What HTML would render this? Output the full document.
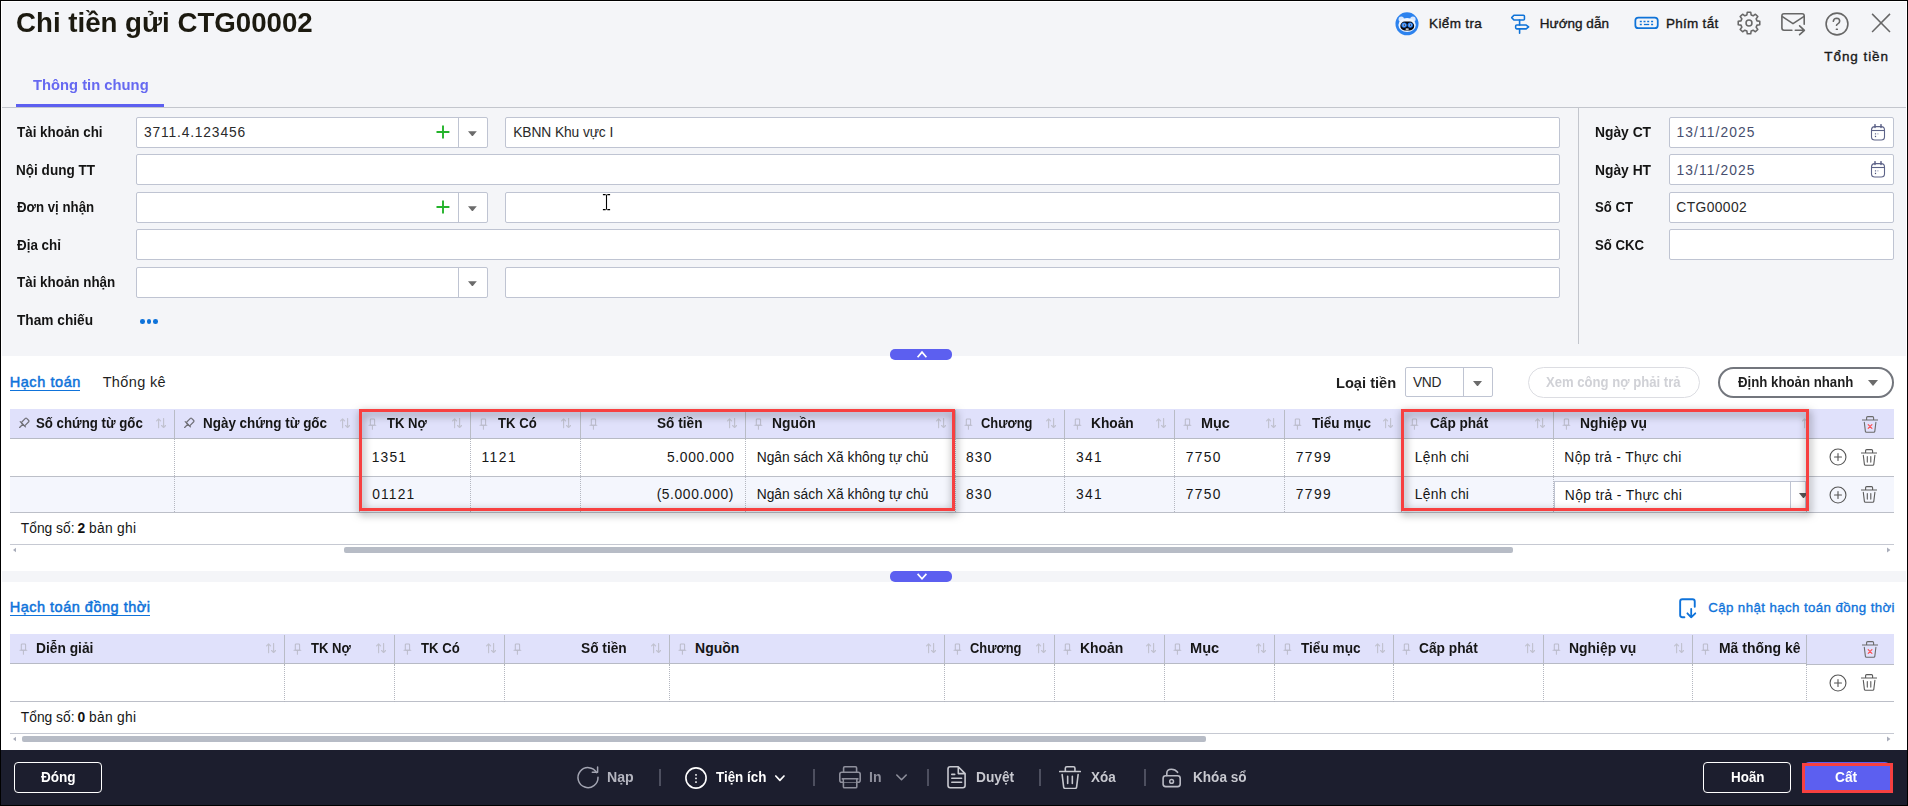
<!DOCTYPE html>
<html lang="vi"><head><meta charset="utf-8"><title>Chi tiền gửi CTG00002</title>
<style>
html,body{margin:0;padding:0;}
body{width:1908px;height:806px;overflow:hidden;background:#000;position:relative;font-family:"Liberation Sans", sans-serif;}
#app div,#app span,#app svg{position:absolute;box-sizing:border-box;}
#app{position:absolute;left:0;top:0;width:1908px;height:806px;overflow:hidden;}
#app span{white-space:pre;line-height:normal;}
</style></head><body><div id="app">
<div style="left:1px;top:1px;width:1906px;height:804px;background:#fff;"></div>
<div style="left:2px;top:2px;width:1904px;height:354px;background:#f4f5f8;"></div>
<div style="left:2px;top:356px;width:1904px;height:215px;background:#fff;"></div>
<div style="left:2px;top:571px;width:1904px;height:11px;background:#f4f5f8;"></div>
<div style="left:2px;top:582px;width:1904px;height:168px;background:#fff;"></div>
<div style="left:1px;top:750px;width:1906px;height:55px;background:#1c1e2e;"></div>
<div style="left:16px;top:104px;width:148px;height:3px;background:#5c5ff0;"></div>
<div style="left:2px;top:107px;width:1904px;height:1px;background:#c3c6cd;"></div>
<div style="left:1578px;top:108px;width:1px;height:236px;background:#c3c6cd;"></div>
<div style="left:136px;top:117px;width:351.5px;height:31px;background:#fff;border:1px solid #bfc4d2;border-radius:2px;"></div>
<div style="left:458px;top:118px;width:1px;height:29px;background:#bfc4d2;"></div>
<svg style="left:468px;top:130.8px;" width="8.8" height="5.7" viewBox="0 0 9 5.5" fill="none"><path d="M0 0h9L4.5 5.5z" fill="#6b6b6b"/></svg>
<svg style="left:435.5px;top:125px;" width="14.0" height="14" viewBox="0 0 14 14" fill="none"><path d="M7 0.400v13.200M0.500 7h12.900" stroke="#24b32b" stroke-width="1.900"/></svg>
<div style="left:505px;top:117px;width:1054.5px;height:31px;background:#fff;border:1px solid #bfc4d2;border-radius:2px;"></div>
<div style="left:136px;top:154px;width:1423.5px;height:31px;background:#fff;border:1px solid #bfc4d2;border-radius:2px;"></div>
<div style="left:136px;top:192px;width:351.5px;height:31px;background:#fff;border:1px solid #bfc4d2;border-radius:2px;"></div>
<div style="left:458px;top:193px;width:1px;height:29px;background:#bfc4d2;"></div>
<svg style="left:468px;top:205.8px;" width="8.8" height="5.7" viewBox="0 0 9 5.5" fill="none"><path d="M0 0h9L4.5 5.5z" fill="#6b6b6b"/></svg>
<svg style="left:435.5px;top:200px;" width="14.0" height="14" viewBox="0 0 14 14" fill="none"><path d="M7 0.400v13.200M0.500 7h12.900" stroke="#24b32b" stroke-width="1.900"/></svg>
<div style="left:505px;top:192px;width:1054.5px;height:31px;background:#fff;border:1px solid #bfc4d2;border-radius:2px;"></div>
<div style="left:136px;top:229px;width:1423.5px;height:31px;background:#fff;border:1px solid #bfc4d2;border-radius:2px;"></div>
<div style="left:136px;top:267px;width:351.5px;height:31px;background:#fff;border:1px solid #bfc4d2;border-radius:2px;"></div>
<div style="left:458px;top:268px;width:1px;height:29px;background:#bfc4d2;"></div>
<svg style="left:468px;top:280.8px;" width="8.8" height="5.7" viewBox="0 0 9 5.5" fill="none"><path d="M0 0h9L4.5 5.5z" fill="#6b6b6b"/></svg>
<div style="left:505px;top:267px;width:1054.5px;height:31px;background:#fff;border:1px solid #bfc4d2;border-radius:2px;"></div>
<div style="left:140.0px;top:319.2px;width:4.6px;height:4.6px;background:#0f73da;border-radius:50%;"></div>
<div style="left:146.7px;top:319.2px;width:4.6px;height:4.6px;background:#0f73da;border-radius:50%;"></div>
<div style="left:153.4px;top:319.2px;width:4.6px;height:4.6px;background:#0f73da;border-radius:50%;"></div>
<div style="left:1669px;top:117px;width:224.5px;height:31px;background:#fff;border:1px solid #bfc4d2;border-radius:2px;"></div>
<svg style="left:1870px;top:123.5px;" width="16" height="17" viewBox="0 0 16 17" fill="none"><rect x="1.5" y="2.600" width="13" height="13.400" rx="3.300" stroke="#5d6388" stroke-width="1.100"/><path d="M1.500 6.500h13" stroke="#5d6388" stroke-width="1.100"/><path d="M5 0.700v2.700M11 0.700v2.700" stroke="#5d6388" stroke-width="1.500" stroke-linecap="round"/><rect x="4.900" y="9.200" width="1.200" height="1.300" fill="#6d7396"/><rect x="7.300" y="9.200" width="1.200" height="1.300" fill="#aeb2c8"/><rect x="4.900" y="11.800" width="1.200" height="1.300" fill="#4b517a"/></svg>
<div style="left:1669px;top:154px;width:224.5px;height:31px;background:#fff;border:1px solid #bfc4d2;border-radius:2px;"></div>
<svg style="left:1870px;top:160.5px;" width="16" height="17" viewBox="0 0 16 17" fill="none"><rect x="1.5" y="2.600" width="13" height="13.400" rx="3.300" stroke="#5d6388" stroke-width="1.100"/><path d="M1.500 6.500h13" stroke="#5d6388" stroke-width="1.100"/><path d="M5 0.700v2.700M11 0.700v2.700" stroke="#5d6388" stroke-width="1.500" stroke-linecap="round"/><rect x="4.900" y="9.200" width="1.200" height="1.300" fill="#6d7396"/><rect x="7.300" y="9.200" width="1.200" height="1.300" fill="#aeb2c8"/><rect x="4.900" y="11.800" width="1.200" height="1.300" fill="#4b517a"/></svg>
<div style="left:1669px;top:192px;width:224.5px;height:31px;background:#fff;border:1px solid #bfc4d2;border-radius:2px;"></div>
<div style="left:1669px;top:229px;width:224.5px;height:31px;background:#fff;border:1px solid #bfc4d2;border-radius:2px;"></div>
<div style="left:890px;top:349px;width:62px;height:11px;background:#5c5ff0;border-radius:5px;"></div>
<svg style="left:915px;top:350px;" width="14" height="10" viewBox="0 0 14 10" fill="none"><path d="M2.600 7.200L7 2.100 11.400 7.200" stroke="#fff" stroke-width="1.700"/></svg>
<div style="left:890px;top:571px;width:62px;height:11px;background:#5c5ff0;border-radius:5px;"></div>
<svg style="left:915px;top:572px;" width="14" height="10" viewBox="0 0 14 10" fill="none"><path d="M2.600 1.900L7 6.800 11.400 1.900" stroke="#fff" stroke-width="1.700"/></svg>
<div style="left:10px;top:390px;width:70px;height:1px;background:#0f73da;"></div>
<div style="left:1405px;top:367px;width:87.5px;height:30px;background:#fff;border:1px solid #bfc4d2;border-radius:2px;"></div>
<div style="left:1463px;top:368px;width:1px;height:28px;background:#bfc4d2;"></div>
<svg style="left:1472.5px;top:380.5px;" width="9.0" height="5.5" viewBox="0 0 9 5.5" fill="none"><path d="M0 0h9L4.5 5.5z" fill="#6b6b6b"/></svg>
<div style="left:1528px;top:367px;width:172px;height:30.5px;border:1px solid #dcdde2;border-radius:16px;background:#fff;"></div>
<div style="left:1718px;top:367px;width:175.5px;height:30.5px;border:2px solid #73767d;border-radius:16px;background:#fff;"></div>
<svg style="left:1867.5px;top:379.5px;" width="10.0" height="6.0" viewBox="0 0 10 6" fill="none"><path d="M0 0h10L5 6z" fill="#6b6b6b"/></svg>
<div style="left:10px;top:409px;width:1884px;height:30px;background:#e0e1fb;"></div>
<div style="left:10px;top:438px;width:1884px;height:1px;background:#b7bac5;"></div>
<div style="left:10px;top:476.0px;width:1884px;height:1.0px;background:#bcbfc8;"></div>
<div style="left:10px;top:476.5px;width:1884px;height:35.5px;background:#f4f6fd;"></div>
<div style="left:10px;top:511.5px;width:1884px;height:1.0px;background:#bcbfc8;"></div>
<div style="left:174.0px;top:410px;width:1.0px;height:28px;background:#b9bcc6;"></div>
<div style="left:174.0px;top:439px;width:1.0px;height:73px;border-left:1px dotted #b4b7c0;"></div>
<div style="left:358.5px;top:410px;width:1.0px;height:28px;background:#b9bcc6;"></div>
<div style="left:358.5px;top:439px;width:1.0px;height:73px;border-left:1px dotted #b4b7c0;"></div>
<div style="left:470.0px;top:410px;width:1.0px;height:28px;background:#b9bcc6;"></div>
<div style="left:470.0px;top:439px;width:1.0px;height:73px;border-left:1px dotted #b4b7c0;"></div>
<div style="left:579.75px;top:410px;width:1.0px;height:28px;background:#b9bcc6;"></div>
<div style="left:579.75px;top:439px;width:1.0px;height:73px;border-left:1px dotted #b4b7c0;"></div>
<div style="left:745.0px;top:410px;width:1.0px;height:28px;background:#b9bcc6;"></div>
<div style="left:745.0px;top:439px;width:1.0px;height:73px;border-left:1px dotted #b4b7c0;"></div>
<div style="left:954.5px;top:410px;width:1.0px;height:28px;background:#b9bcc6;"></div>
<div style="left:954.5px;top:439px;width:1.0px;height:73px;border-left:1px dotted #b4b7c0;"></div>
<div style="left:1064.0px;top:410px;width:1.0px;height:28px;background:#b9bcc6;"></div>
<div style="left:1064.0px;top:439px;width:1.0px;height:73px;border-left:1px dotted #b4b7c0;"></div>
<div style="left:1174.0px;top:410px;width:1.0px;height:28px;background:#b9bcc6;"></div>
<div style="left:1174.0px;top:439px;width:1.0px;height:73px;border-left:1px dotted #b4b7c0;"></div>
<div style="left:1284.0px;top:410px;width:1.0px;height:28px;background:#b9bcc6;"></div>
<div style="left:1284.0px;top:439px;width:1.0px;height:73px;border-left:1px dotted #b4b7c0;"></div>
<div style="left:1401.0px;top:410px;width:1.0px;height:28px;background:#b9bcc6;"></div>
<div style="left:1401.0px;top:439px;width:1.0px;height:73px;border-left:1px dotted #b4b7c0;"></div>
<div style="left:1553.0px;top:410px;width:1.0px;height:28px;background:#b9bcc6;"></div>
<div style="left:1553.0px;top:439px;width:1.0px;height:73px;border-left:1px dotted #b4b7c0;"></div>
<div style="left:1805.5px;top:410px;width:1.0px;height:28px;background:#b9bcc6;"></div>
<div style="left:1805.5px;top:439px;width:1.0px;height:73px;border-left:1px dotted #b4b7c0;"></div>
<svg style="left:17px;top:416px;" width="14" height="14" viewBox="0 0 14 14" fill="none"><g transform="translate(6.600 7.500) rotate(45) scale(1.100) translate(-4.400 -6.200)"><rect x="2.300" y="1" width="4.300" height="6.200" rx="0.800" stroke="#707078" stroke-width="1.1"/><path d="M1 7.200H7.800M4.400 7.200V11.300" stroke="#707078" stroke-width="1.1" stroke-linecap="round"/></g></svg>
<svg style="left:155.5px;top:418.4px;" width="10.2" height="10.4" viewBox="0 0 10.2 10.4" fill="none"><path d="M2.600 9.800V0.800M0.600 2.800L2.600 0.800 4.600 2.800M7.600 0.500v9M5.600 7.500l2 2 2-2" stroke="#c1c2d0" stroke-width="1.150" stroke-linecap="round" stroke-linejoin="round"/></svg>
<svg style="left:181.5px;top:416px;" width="14" height="14" viewBox="0 0 14 14" fill="none"><g transform="translate(6.600 7.500) rotate(45) scale(1.100) translate(-4.400 -6.200)"><rect x="2.300" y="1" width="4.300" height="6.200" rx="0.800" stroke="#707078" stroke-width="1.1"/><path d="M1 7.200H7.800M4.400 7.200V11.300" stroke="#707078" stroke-width="1.1" stroke-linecap="round"/></g></svg>
<svg style="left:340px;top:418.4px;" width="10.2" height="10.4" viewBox="0 0 10.2 10.4" fill="none"><path d="M2.600 9.800V0.800M0.600 2.800L2.600 0.800 4.600 2.800M7.600 0.500v9M5.600 7.500l2 2 2-2" stroke="#c1c2d0" stroke-width="1.150" stroke-linecap="round" stroke-linejoin="round"/></svg>
<svg style="left:367.6px;top:417.8px;" width="9" height="12" viewBox="0 0 9 12" fill="none"><rect x="2.300" y="1" width="4.300" height="6.200" rx="0.800" stroke="#bbbccb" stroke-width="1.05"/><path d="M1 7.200H7.800M4.400 7.200V11.300" stroke="#bbbccb" stroke-width="1.05" stroke-linecap="round"/></svg>
<svg style="left:451.5px;top:418.4px;" width="10.2" height="10.4" viewBox="0 0 10.2 10.4" fill="none"><path d="M2.600 9.800V0.800M0.600 2.800L2.600 0.800 4.600 2.800M7.600 0.500v9M5.600 7.500l2 2 2-2" stroke="#c1c2d0" stroke-width="1.150" stroke-linecap="round" stroke-linejoin="round"/></svg>
<svg style="left:479.1px;top:417.8px;" width="9" height="12" viewBox="0 0 9 12" fill="none"><rect x="2.300" y="1" width="4.300" height="6.200" rx="0.800" stroke="#bbbccb" stroke-width="1.05"/><path d="M1 7.200H7.800M4.400 7.200V11.300" stroke="#bbbccb" stroke-width="1.05" stroke-linecap="round"/></svg>
<svg style="left:561.25px;top:418.4px;" width="10.2" height="10.4" viewBox="0 0 10.2 10.4" fill="none"><path d="M2.600 9.800V0.800M0.600 2.800L2.600 0.800 4.600 2.800M7.600 0.500v9M5.600 7.500l2 2 2-2" stroke="#c1c2d0" stroke-width="1.150" stroke-linecap="round" stroke-linejoin="round"/></svg>
<svg style="left:588.85px;top:417.8px;" width="9" height="12" viewBox="0 0 9 12" fill="none"><rect x="2.300" y="1" width="4.300" height="6.200" rx="0.800" stroke="#bbbccb" stroke-width="1.05"/><path d="M1 7.200H7.800M4.400 7.200V11.300" stroke="#bbbccb" stroke-width="1.05" stroke-linecap="round"/></svg>
<svg style="left:726.5px;top:418.4px;" width="10.2" height="10.4" viewBox="0 0 10.2 10.4" fill="none"><path d="M2.600 9.800V0.800M0.600 2.800L2.600 0.800 4.600 2.800M7.600 0.500v9M5.600 7.500l2 2 2-2" stroke="#c1c2d0" stroke-width="1.150" stroke-linecap="round" stroke-linejoin="round"/></svg>
<svg style="left:754.1px;top:417.8px;" width="9" height="12" viewBox="0 0 9 12" fill="none"><rect x="2.300" y="1" width="4.300" height="6.200" rx="0.800" stroke="#bbbccb" stroke-width="1.05"/><path d="M1 7.200H7.800M4.400 7.200V11.300" stroke="#bbbccb" stroke-width="1.05" stroke-linecap="round"/></svg>
<svg style="left:936px;top:418.4px;" width="10.2" height="10.4" viewBox="0 0 10.2 10.4" fill="none"><path d="M2.600 9.800V0.800M0.600 2.800L2.600 0.800 4.600 2.800M7.600 0.500v9M5.600 7.500l2 2 2-2" stroke="#c1c2d0" stroke-width="1.150" stroke-linecap="round" stroke-linejoin="round"/></svg>
<svg style="left:963.6px;top:417.8px;" width="9" height="12" viewBox="0 0 9 12" fill="none"><rect x="2.300" y="1" width="4.300" height="6.200" rx="0.800" stroke="#bbbccb" stroke-width="1.05"/><path d="M1 7.200H7.800M4.400 7.200V11.300" stroke="#bbbccb" stroke-width="1.05" stroke-linecap="round"/></svg>
<svg style="left:1045.5px;top:418.4px;" width="10.2" height="10.4" viewBox="0 0 10.2 10.4" fill="none"><path d="M2.600 9.800V0.800M0.600 2.800L2.600 0.800 4.600 2.800M7.600 0.500v9M5.600 7.500l2 2 2-2" stroke="#c1c2d0" stroke-width="1.150" stroke-linecap="round" stroke-linejoin="round"/></svg>
<svg style="left:1073.1px;top:417.8px;" width="9" height="12" viewBox="0 0 9 12" fill="none"><rect x="2.300" y="1" width="4.300" height="6.200" rx="0.800" stroke="#bbbccb" stroke-width="1.05"/><path d="M1 7.200H7.800M4.400 7.200V11.300" stroke="#bbbccb" stroke-width="1.05" stroke-linecap="round"/></svg>
<svg style="left:1155.5px;top:418.4px;" width="10.2" height="10.4" viewBox="0 0 10.2 10.4" fill="none"><path d="M2.600 9.800V0.800M0.600 2.800L2.600 0.800 4.600 2.800M7.600 0.500v9M5.600 7.500l2 2 2-2" stroke="#c1c2d0" stroke-width="1.150" stroke-linecap="round" stroke-linejoin="round"/></svg>
<svg style="left:1183.1px;top:417.8px;" width="9" height="12" viewBox="0 0 9 12" fill="none"><rect x="2.300" y="1" width="4.300" height="6.200" rx="0.800" stroke="#bbbccb" stroke-width="1.05"/><path d="M1 7.200H7.800M4.400 7.200V11.300" stroke="#bbbccb" stroke-width="1.05" stroke-linecap="round"/></svg>
<svg style="left:1265.5px;top:418.4px;" width="10.2" height="10.4" viewBox="0 0 10.2 10.4" fill="none"><path d="M2.600 9.800V0.800M0.600 2.800L2.600 0.800 4.600 2.800M7.600 0.500v9M5.600 7.500l2 2 2-2" stroke="#c1c2d0" stroke-width="1.150" stroke-linecap="round" stroke-linejoin="round"/></svg>
<svg style="left:1293.1px;top:417.8px;" width="9" height="12" viewBox="0 0 9 12" fill="none"><rect x="2.300" y="1" width="4.300" height="6.200" rx="0.800" stroke="#bbbccb" stroke-width="1.05"/><path d="M1 7.200H7.800M4.400 7.200V11.300" stroke="#bbbccb" stroke-width="1.05" stroke-linecap="round"/></svg>
<svg style="left:1382.5px;top:418.4px;" width="10.2" height="10.4" viewBox="0 0 10.2 10.4" fill="none"><path d="M2.600 9.800V0.800M0.600 2.800L2.600 0.800 4.600 2.800M7.600 0.500v9M5.600 7.500l2 2 2-2" stroke="#c1c2d0" stroke-width="1.150" stroke-linecap="round" stroke-linejoin="round"/></svg>
<svg style="left:1410.1px;top:417.8px;" width="9" height="12" viewBox="0 0 9 12" fill="none"><rect x="2.300" y="1" width="4.300" height="6.200" rx="0.800" stroke="#bbbccb" stroke-width="1.05"/><path d="M1 7.200H7.800M4.400 7.200V11.300" stroke="#bbbccb" stroke-width="1.05" stroke-linecap="round"/></svg>
<svg style="left:1534.5px;top:418.4px;" width="10.2" height="10.4" viewBox="0 0 10.2 10.4" fill="none"><path d="M2.600 9.800V0.800M0.600 2.800L2.600 0.800 4.600 2.800M7.600 0.500v9M5.600 7.500l2 2 2-2" stroke="#c1c2d0" stroke-width="1.150" stroke-linecap="round" stroke-linejoin="round"/></svg>
<svg style="left:1562.1px;top:417.8px;" width="9" height="12" viewBox="0 0 9 12" fill="none"><rect x="2.300" y="1" width="4.300" height="6.200" rx="0.800" stroke="#bbbccb" stroke-width="1.05"/><path d="M1 7.200H7.800M4.400 7.200V11.300" stroke="#bbbccb" stroke-width="1.05" stroke-linecap="round"/></svg>
<svg style="left:1801.8px;top:418.4px;" width="10.2" height="10.4" viewBox="0 0 10.2 10.4" fill="none"><path d="M2.600 9.800V0.800M0.600 2.800L2.600 0.800 4.600 2.800M7.600 0.500v9M5.600 7.500l2 2 2-2" stroke="#c1c2d0" stroke-width="1.150" stroke-linecap="round" stroke-linejoin="round"/></svg>
<div style="left:1809px;top:409px;width:85px;height:29px;background:#e0e1fb;"></div>
<div style="left:1554px;top:480.5px;width:252px;height:28.5px;background:#fff;border:1px solid #bfc4d2;"></div>
<div style="left:1790px;top:481.5px;width:1px;height:26.5px;background:#bfc4d2;"></div>
<svg style="left:1799px;top:492.5px;" width="9" height="5.5" viewBox="0 0 9 5.5" fill="none"><path d="M0 0h9L4.5 5.5z" fill="#555"/></svg>
<svg style="left:1862px;top:415.5px;" width="16" height="17" viewBox="0 0 16 17" fill="none"><path d="M0.400 4H15.600M4.600 4V1.700Q4.600 0.600 5.700 0.600H10.500Q11.600 0.600 11.600 1.700V4M2.300 6.200L3.400 15.400Q3.500 16.300 4.500 16.300H11.700Q12.700 16.300 12.800 15.400L13.900 6.200" stroke="#6a6a6a" stroke-width="1.1" stroke-linecap="round" stroke-linejoin="round"/><path d="M6.200 8.700l3.700 3.700M9.900 8.700l-3.700 3.700" stroke="#ff4d4f" stroke-width="1.150" stroke-linecap="round"/></svg>
<svg style="left:1829.4px;top:448.4px;" width="18" height="18" viewBox="0 0 18 18" fill="none"><circle cx="9" cy="9" r="7.950" stroke="#555" stroke-width="1.100"/><path d="M9 5.500v7M5.500 9h7" stroke="#555" stroke-width="1.100" stroke-linecap="round"/></svg>
<svg style="left:1861px;top:448.6px;" width="16" height="17" viewBox="0 0 16 17" fill="none"><path d="M0.400 4H15.600M4.600 4V1.700Q4.600 0.600 5.700 0.600H10.500Q11.600 0.600 11.600 1.700V4M2.300 6.200L3.400 15.400Q3.500 16.300 4.500 16.300H11.700Q12.700 16.300 12.800 15.400L13.900 6.200" stroke="#5a5a5a" stroke-width="1.1" stroke-linecap="round" stroke-linejoin="round"/><path d="M6.300 7.500v5.600M9.800 7.500v5.600" stroke="#5a5a5a" stroke-width="1.100" stroke-linecap="round"/></svg>
<svg style="left:1829.4px;top:486px;" width="18" height="18" viewBox="0 0 18 18" fill="none"><circle cx="9" cy="9" r="7.950" stroke="#555" stroke-width="1.100"/><path d="M9 5.500v7M5.500 9h7" stroke="#555" stroke-width="1.100" stroke-linecap="round"/></svg>
<svg style="left:1861px;top:486.2px;" width="16" height="17" viewBox="0 0 16 17" fill="none"><path d="M0.400 4H15.600M4.600 4V1.700Q4.600 0.600 5.700 0.600H10.500Q11.600 0.600 11.600 1.700V4M2.300 6.200L3.400 15.400Q3.500 16.300 4.500 16.300H11.700Q12.700 16.300 12.800 15.400L13.900 6.200" stroke="#5a5a5a" stroke-width="1.1" stroke-linecap="round" stroke-linejoin="round"/><path d="M6.300 7.500v5.600M9.800 7.500v5.600" stroke="#5a5a5a" stroke-width="1.100" stroke-linecap="round"/></svg>
<div style="left:10px;top:544px;width:1884px;height:1px;background:#c6c9d2;"></div>
<div style="left:344px;top:547.4px;width:1168.5px;height:6.0px;background:#b7bcc6;border-radius:2px;"></div>
<svg style="left:12.9px;top:547px;" width="3.4" height="6" viewBox="0 0 4.5 6.5" fill="none"><path d="M4.5 0v6.5L0 3.250z" fill="#a9adba"/></svg>
<svg style="left:1887.3px;top:547px;" width="3.4" height="6" viewBox="0 0 4.5 6.5" fill="none"><path d="M0 0v6.5L4.5 3.250z" fill="#a9adba"/></svg>
<div style="left:10px;top:615px;width:139.5px;height:1px;background:#0f73da;"></div>
<svg style="left:1678px;top:596.5px;" width="19" height="23" viewBox="0 0 19 23" fill="none"><path d="M6.400 20.300H4.400Q2.150 20.300 2.150 18.100V4.500Q2.150 2.250 4.400 2.250H14.500Q16.750 2.250 16.750 4.500V9.700" stroke="#0f73da" stroke-width="1.900" stroke-linecap="round"/><path d="M13.200 11.800V20.300M9.400 16.300L13.200 20.400 17.300 16.300" stroke="#0f73da" stroke-width="1.800" stroke-linecap="round" stroke-linejoin="round"/></svg>
<div style="left:10px;top:634px;width:1884px;height:30px;background:#e0e1fb;"></div>
<div style="left:10px;top:663px;width:1884px;height:1px;background:#b7bac5;"></div>
<div style="left:10px;top:701.0px;width:1884px;height:1.0px;background:#bcbfc8;"></div>
<div style="left:284.0px;top:635px;width:1.0px;height:28px;background:#b9bcc6;"></div>
<div style="left:284.0px;top:664px;width:1.0px;height:37.5px;border-left:1px dotted #b4b7c0;"></div>
<div style="left:394.0px;top:635px;width:1.0px;height:28px;background:#b9bcc6;"></div>
<div style="left:394.0px;top:664px;width:1.0px;height:37.5px;border-left:1px dotted #b4b7c0;"></div>
<div style="left:504.0px;top:635px;width:1.0px;height:28px;background:#b9bcc6;"></div>
<div style="left:504.0px;top:664px;width:1.0px;height:37.5px;border-left:1px dotted #b4b7c0;"></div>
<div style="left:669.0px;top:635px;width:1.0px;height:28px;background:#b9bcc6;"></div>
<div style="left:669.0px;top:664px;width:1.0px;height:37.5px;border-left:1px dotted #b4b7c0;"></div>
<div style="left:944.0px;top:635px;width:1.0px;height:28px;background:#b9bcc6;"></div>
<div style="left:944.0px;top:664px;width:1.0px;height:37.5px;border-left:1px dotted #b4b7c0;"></div>
<div style="left:1054.0px;top:635px;width:1.0px;height:28px;background:#b9bcc6;"></div>
<div style="left:1054.0px;top:664px;width:1.0px;height:37.5px;border-left:1px dotted #b4b7c0;"></div>
<div style="left:1164.0px;top:635px;width:1.0px;height:28px;background:#b9bcc6;"></div>
<div style="left:1164.0px;top:664px;width:1.0px;height:37.5px;border-left:1px dotted #b4b7c0;"></div>
<div style="left:1274.0px;top:635px;width:1.0px;height:28px;background:#b9bcc6;"></div>
<div style="left:1274.0px;top:664px;width:1.0px;height:37.5px;border-left:1px dotted #b4b7c0;"></div>
<div style="left:1393.0px;top:635px;width:1.0px;height:28px;background:#b9bcc6;"></div>
<div style="left:1393.0px;top:664px;width:1.0px;height:37.5px;border-left:1px dotted #b4b7c0;"></div>
<div style="left:1543.0px;top:635px;width:1.0px;height:28px;background:#b9bcc6;"></div>
<div style="left:1543.0px;top:664px;width:1.0px;height:37.5px;border-left:1px dotted #b4b7c0;"></div>
<div style="left:1692.0px;top:635px;width:1.0px;height:28px;background:#b9bcc6;"></div>
<div style="left:1692.0px;top:664px;width:1.0px;height:37.5px;border-left:1px dotted #b4b7c0;"></div>
<div style="left:1806.0px;top:635px;width:1.0px;height:28px;background:#b9bcc6;"></div>
<div style="left:1806.0px;top:664px;width:1.0px;height:37.5px;border-left:1px dotted #b4b7c0;"></div>
<svg style="left:18.6px;top:642.8px;" width="9" height="12" viewBox="0 0 9 12" fill="none"><rect x="2.300" y="1" width="4.300" height="6.200" rx="0.800" stroke="#bbbccb" stroke-width="1.05"/><path d="M1 7.200H7.800M4.400 7.200V11.300" stroke="#bbbccb" stroke-width="1.05" stroke-linecap="round"/></svg>
<svg style="left:265.5px;top:643.4px;" width="10.2" height="10.4" viewBox="0 0 10.2 10.4" fill="none"><path d="M2.600 9.800V0.800M0.600 2.800L2.600 0.800 4.600 2.800M7.600 0.500v9M5.600 7.500l2 2 2-2" stroke="#c1c2d0" stroke-width="1.150" stroke-linecap="round" stroke-linejoin="round"/></svg>
<svg style="left:293.1px;top:642.8px;" width="9" height="12" viewBox="0 0 9 12" fill="none"><rect x="2.300" y="1" width="4.300" height="6.200" rx="0.800" stroke="#bbbccb" stroke-width="1.05"/><path d="M1 7.200H7.800M4.400 7.200V11.300" stroke="#bbbccb" stroke-width="1.05" stroke-linecap="round"/></svg>
<svg style="left:375.5px;top:643.4px;" width="10.2" height="10.4" viewBox="0 0 10.2 10.4" fill="none"><path d="M2.600 9.800V0.800M0.600 2.800L2.600 0.800 4.600 2.800M7.600 0.500v9M5.600 7.500l2 2 2-2" stroke="#c1c2d0" stroke-width="1.150" stroke-linecap="round" stroke-linejoin="round"/></svg>
<svg style="left:403.1px;top:642.8px;" width="9" height="12" viewBox="0 0 9 12" fill="none"><rect x="2.300" y="1" width="4.300" height="6.200" rx="0.800" stroke="#bbbccb" stroke-width="1.05"/><path d="M1 7.200H7.800M4.400 7.200V11.300" stroke="#bbbccb" stroke-width="1.05" stroke-linecap="round"/></svg>
<svg style="left:485.5px;top:643.4px;" width="10.2" height="10.4" viewBox="0 0 10.2 10.4" fill="none"><path d="M2.600 9.800V0.800M0.600 2.800L2.600 0.800 4.600 2.800M7.600 0.500v9M5.600 7.500l2 2 2-2" stroke="#c1c2d0" stroke-width="1.150" stroke-linecap="round" stroke-linejoin="round"/></svg>
<svg style="left:513.1px;top:642.8px;" width="9" height="12" viewBox="0 0 9 12" fill="none"><rect x="2.300" y="1" width="4.300" height="6.200" rx="0.800" stroke="#bbbccb" stroke-width="1.05"/><path d="M1 7.200H7.800M4.400 7.200V11.300" stroke="#bbbccb" stroke-width="1.05" stroke-linecap="round"/></svg>
<svg style="left:650.5px;top:643.4px;" width="10.2" height="10.4" viewBox="0 0 10.2 10.4" fill="none"><path d="M2.600 9.800V0.800M0.600 2.800L2.600 0.800 4.600 2.800M7.600 0.500v9M5.600 7.500l2 2 2-2" stroke="#c1c2d0" stroke-width="1.150" stroke-linecap="round" stroke-linejoin="round"/></svg>
<svg style="left:678.1px;top:642.8px;" width="9" height="12" viewBox="0 0 9 12" fill="none"><rect x="2.300" y="1" width="4.300" height="6.200" rx="0.800" stroke="#bbbccb" stroke-width="1.05"/><path d="M1 7.200H7.800M4.400 7.200V11.300" stroke="#bbbccb" stroke-width="1.05" stroke-linecap="round"/></svg>
<svg style="left:925.5px;top:643.4px;" width="10.2" height="10.4" viewBox="0 0 10.2 10.4" fill="none"><path d="M2.600 9.800V0.800M0.600 2.800L2.600 0.800 4.600 2.800M7.600 0.500v9M5.600 7.500l2 2 2-2" stroke="#c1c2d0" stroke-width="1.150" stroke-linecap="round" stroke-linejoin="round"/></svg>
<svg style="left:953.1px;top:642.8px;" width="9" height="12" viewBox="0 0 9 12" fill="none"><rect x="2.300" y="1" width="4.300" height="6.200" rx="0.800" stroke="#bbbccb" stroke-width="1.05"/><path d="M1 7.200H7.800M4.400 7.200V11.300" stroke="#bbbccb" stroke-width="1.05" stroke-linecap="round"/></svg>
<svg style="left:1035.5px;top:643.4px;" width="10.2" height="10.4" viewBox="0 0 10.2 10.4" fill="none"><path d="M2.600 9.800V0.800M0.600 2.800L2.600 0.800 4.600 2.800M7.600 0.500v9M5.600 7.500l2 2 2-2" stroke="#c1c2d0" stroke-width="1.150" stroke-linecap="round" stroke-linejoin="round"/></svg>
<svg style="left:1063.1px;top:642.8px;" width="9" height="12" viewBox="0 0 9 12" fill="none"><rect x="2.300" y="1" width="4.300" height="6.200" rx="0.800" stroke="#bbbccb" stroke-width="1.05"/><path d="M1 7.200H7.800M4.400 7.200V11.300" stroke="#bbbccb" stroke-width="1.05" stroke-linecap="round"/></svg>
<svg style="left:1145.5px;top:643.4px;" width="10.2" height="10.4" viewBox="0 0 10.2 10.4" fill="none"><path d="M2.600 9.800V0.800M0.600 2.800L2.600 0.800 4.600 2.800M7.600 0.500v9M5.600 7.500l2 2 2-2" stroke="#c1c2d0" stroke-width="1.150" stroke-linecap="round" stroke-linejoin="round"/></svg>
<svg style="left:1173.1px;top:642.8px;" width="9" height="12" viewBox="0 0 9 12" fill="none"><rect x="2.300" y="1" width="4.300" height="6.200" rx="0.800" stroke="#bbbccb" stroke-width="1.05"/><path d="M1 7.200H7.800M4.400 7.200V11.300" stroke="#bbbccb" stroke-width="1.05" stroke-linecap="round"/></svg>
<svg style="left:1255.5px;top:643.4px;" width="10.2" height="10.4" viewBox="0 0 10.2 10.4" fill="none"><path d="M2.600 9.800V0.800M0.600 2.800L2.600 0.800 4.600 2.800M7.600 0.500v9M5.600 7.500l2 2 2-2" stroke="#c1c2d0" stroke-width="1.150" stroke-linecap="round" stroke-linejoin="round"/></svg>
<svg style="left:1283.1px;top:642.8px;" width="9" height="12" viewBox="0 0 9 12" fill="none"><rect x="2.300" y="1" width="4.300" height="6.200" rx="0.800" stroke="#bbbccb" stroke-width="1.05"/><path d="M1 7.200H7.800M4.400 7.200V11.300" stroke="#bbbccb" stroke-width="1.05" stroke-linecap="round"/></svg>
<svg style="left:1374.5px;top:643.4px;" width="10.2" height="10.4" viewBox="0 0 10.2 10.4" fill="none"><path d="M2.600 9.800V0.800M0.600 2.800L2.600 0.800 4.600 2.800M7.600 0.500v9M5.600 7.500l2 2 2-2" stroke="#c1c2d0" stroke-width="1.150" stroke-linecap="round" stroke-linejoin="round"/></svg>
<svg style="left:1402.1px;top:642.8px;" width="9" height="12" viewBox="0 0 9 12" fill="none"><rect x="2.300" y="1" width="4.300" height="6.200" rx="0.800" stroke="#bbbccb" stroke-width="1.05"/><path d="M1 7.200H7.800M4.400 7.200V11.300" stroke="#bbbccb" stroke-width="1.05" stroke-linecap="round"/></svg>
<svg style="left:1524.5px;top:643.4px;" width="10.2" height="10.4" viewBox="0 0 10.2 10.4" fill="none"><path d="M2.600 9.800V0.800M0.600 2.800L2.600 0.800 4.600 2.800M7.600 0.500v9M5.600 7.500l2 2 2-2" stroke="#c1c2d0" stroke-width="1.150" stroke-linecap="round" stroke-linejoin="round"/></svg>
<svg style="left:1552.1px;top:642.8px;" width="9" height="12" viewBox="0 0 9 12" fill="none"><rect x="2.300" y="1" width="4.300" height="6.200" rx="0.800" stroke="#bbbccb" stroke-width="1.05"/><path d="M1 7.200H7.800M4.400 7.200V11.300" stroke="#bbbccb" stroke-width="1.05" stroke-linecap="round"/></svg>
<svg style="left:1673.5px;top:643.4px;" width="10.2" height="10.4" viewBox="0 0 10.2 10.4" fill="none"><path d="M2.600 9.800V0.800M0.600 2.800L2.600 0.800 4.600 2.800M7.600 0.500v9M5.600 7.500l2 2 2-2" stroke="#c1c2d0" stroke-width="1.150" stroke-linecap="round" stroke-linejoin="round"/></svg>
<svg style="left:1701.1px;top:642.8px;" width="9" height="12" viewBox="0 0 9 12" fill="none"><rect x="2.300" y="1" width="4.300" height="6.200" rx="0.800" stroke="#bbbccb" stroke-width="1.05"/><path d="M1 7.200H7.800M4.400 7.200V11.300" stroke="#bbbccb" stroke-width="1.05" stroke-linecap="round"/></svg>
<div style="left:1806.5px;top:634px;width:87.5px;height:31px;background:#e0e1fb;border-bottom:1px solid #b9bcc6;"></div>
<svg style="left:1862px;top:640.5px;" width="16" height="17" viewBox="0 0 16 17" fill="none"><path d="M0.400 4H15.600M4.600 4V1.700Q4.600 0.600 5.700 0.600H10.500Q11.600 0.600 11.600 1.700V4M2.300 6.200L3.400 15.400Q3.500 16.300 4.500 16.300H11.700Q12.700 16.300 12.800 15.400L13.900 6.200" stroke="#6a6a6a" stroke-width="1.1" stroke-linecap="round" stroke-linejoin="round"/><path d="M6.200 8.700l3.700 3.700M9.900 8.700l-3.700 3.700" stroke="#ff4d4f" stroke-width="1.150" stroke-linecap="round"/></svg>
<svg style="left:1829.4px;top:674px;" width="18" height="18" viewBox="0 0 18 18" fill="none"><circle cx="9" cy="9" r="7.950" stroke="#555" stroke-width="1.100"/><path d="M9 5.500v7M5.500 9h7" stroke="#555" stroke-width="1.100" stroke-linecap="round"/></svg>
<svg style="left:1861px;top:674.2px;" width="16" height="17" viewBox="0 0 16 17" fill="none"><path d="M0.400 4H15.600M4.600 4V1.700Q4.600 0.600 5.700 0.600H10.500Q11.600 0.600 11.600 1.700V4M2.300 6.200L3.400 15.400Q3.500 16.300 4.500 16.300H11.700Q12.700 16.300 12.800 15.400L13.900 6.200" stroke="#5a5a5a" stroke-width="1.1" stroke-linecap="round" stroke-linejoin="round"/><path d="M6.300 7.500v5.600M9.800 7.500v5.600" stroke="#5a5a5a" stroke-width="1.100" stroke-linecap="round"/></svg>
<div style="left:10px;top:732.5px;width:1884px;height:1.0px;background:#c6c9d2;"></div>
<div style="left:22px;top:736px;width:1184px;height:6px;background:#b7bcc6;border-radius:2px;"></div>
<svg style="left:12.9px;top:736px;" width="3.4" height="6" viewBox="0 0 4.5 6.5" fill="none"><path d="M4.5 0v6.5L0 3.250z" fill="#a9adba"/></svg>
<svg style="left:1887.3px;top:736px;" width="3.4" height="6" viewBox="0 0 4.5 6.5" fill="none"><path d="M0 0v6.5L4.5 3.250z" fill="#a9adba"/></svg>
<div style="left:359px;top:409px;width:596px;height:102px;border:3px solid #f74040;filter:drop-shadow(1px 3.500px 4px rgba(0,0,0,.52));"></div>
<div style="left:1401px;top:409px;width:408px;height:102px;border:3px solid #f74040;filter:drop-shadow(1px 3.500px 4px rgba(0,0,0,.52));"></div>
<div style="left:14px;top:762px;width:88px;height:31px;border:1px solid #fff;border-radius:4px;"></div>
<div style="left:1703px;top:762px;width:88px;height:31px;border:1px solid #fff;border-radius:4px;"></div>
<div style="left:1805px;top:762px;width:84px;height:31px;background:#5c5ff0;border-radius:4px;"></div>
<div style="left:1802px;top:763px;width:91px;height:30px;border:3px solid #f74040;background:#5c5ff0;"></div>
<div style="left:659px;top:769px;width:2px;height:16.5px;background:#4d4f5f;"></div>
<div style="left:812.8px;top:769px;width:2.0px;height:16.5px;background:#4d4f5f;"></div>
<div style="left:927px;top:769px;width:2px;height:16.5px;background:#4d4f5f;"></div>
<div style="left:1039px;top:769px;width:2px;height:16.5px;background:#4d4f5f;"></div>
<div style="left:1144px;top:769px;width:2px;height:16.5px;background:#4d4f5f;"></div>
<svg style="left:576px;top:765px;" width="24" height="25" viewBox="0 0 24 25" fill="none"><path d="M20.660 7.600A10 10 0 1 0 22 12.300" stroke="#a3a5b2" stroke-width="1.500" stroke-linecap="round"/><path d="M21.600 1.900V7.200H16.300" stroke="#a3a5b2" stroke-width="1.500" stroke-linecap="round" stroke-linejoin="round"/></svg>
<svg style="left:684px;top:765.5px;" width="24" height="24" viewBox="0 0 24 24" fill="none"><circle cx="12" cy="12" r="10.100" stroke="#fff" stroke-width="1.600"/><rect x="11.200" y="8.100" width="1.600" height="1.600" fill="#fff"/><rect x="11.200" y="11.600" width="1.600" height="1.600" fill="#fff"/><rect x="11.200" y="15.300" width="1.600" height="1.600" fill="#fff"/></svg>
<svg style="left:774px;top:773.5px;" width="12" height="8" viewBox="0 0 12 8" fill="none"><path d="M1.800 2L5.900 6.300 10 2" stroke="#fff" stroke-width="1.700" stroke-linecap="round" stroke-linejoin="round"/></svg>
<svg style="left:837.5px;top:765.2px;" width="24" height="24.6" viewBox="0 0 24 24.6" fill="none"><path d="M5.600 7.300V2.900Q5.600 1.800 6.700 1.800H17.500Q18.600 1.800 18.600 2.900V7.300" stroke="#8e8f9c" stroke-width="1.600"/><rect x="1.800" y="7.300" width="20.400" height="10" rx="2" stroke="#8e8f9c" stroke-width="1.600"/><path d="M4.300 13.900H19.900M5.400 13.900V21.700Q5.400 22.800 6.500 22.800H17.700Q18.800 22.800 18.800 21.700V13.900" stroke="#8e8f9c" stroke-width="1.600" stroke-linecap="round"/><rect x="6.200" y="14.700" width="11.800" height="2.600" fill="#1c1e2e"/></svg>
<svg style="left:894.7px;top:773.3px;" width="13" height="8" viewBox="0 0 13 8" fill="none"><path d="M1.800 2L6.500 6.700 11.200 2" stroke="#8e8f9c" stroke-width="1.600" stroke-linecap="round" stroke-linejoin="round"/></svg>
<svg style="left:946px;top:765.2px;" width="21" height="24.6" viewBox="0 0 21 24.6" fill="none"><path d="M12.300 1.800H4.200Q2 1.800 2 4V20.600Q2 22.800 4.200 22.800H16.900Q19.100 22.800 19.100 20.600V8.600ZM12.300 1.800V8.600H19.100M5.800 9.400H8.700M5.800 13.200H15.600M5.800 17.300H15.600" stroke="#c8c9d0" stroke-width="1.600" stroke-linecap="round" stroke-linejoin="round"/></svg>
<svg style="left:1059.4px;top:765.8px" width="22" height="23.400" viewBox="0 0 16 17" fill="none"><path d="M0.400 4H15.600M4.600 4V1.700Q4.600 0.600 5.700 0.600H10.500Q11.600 0.600 11.600 1.700V4M2.300 6.200L3.400 15.400Q3.500 16.300 4.500 16.300H11.700Q12.700 16.300 12.800 15.400L13.900 6.200" stroke="#c8c9d0" stroke-width="1.15" stroke-linecap="round" stroke-linejoin="round"/><path d="M6.300 7.500v5.200M9.700 7.500v5.200" stroke="#c8c9d0" stroke-width="1.150" stroke-linecap="round"/></svg>
<svg style="left:1161px;top:766.5px;" width="22" height="22" viewBox="0 0 22 22" fill="none"><rect x="2.100" y="8.800" width="17.100" height="10.800" rx="2.600" stroke="#b9bac4" stroke-width="1.600"/><path d="M5.800 8.600V6.200Q5.800 2.200 10.400 2.200Q14.300 2.200 16.600 5.300" stroke="#b9bac4" stroke-width="1.600" stroke-linecap="round"/><circle cx="10.600" cy="14.400" r="1.900" stroke="#b9bac4" stroke-width="1.500"/></svg>
<svg style="left:1394.5px;top:11.7px;" width="24" height="24" viewBox="0 0 24 24" fill="none"><circle cx="12" cy="11.800" r="11.550" fill="#2c82ee"/><circle cx="6.300" cy="7.300" r="2.700" fill="#d9e8fd"/><circle cx="17.900" cy="7.300" r="2.700" fill="#d9e8fd"/><ellipse cx="12.100" cy="13" rx="8.700" ry="7" fill="#eef5ff"/><rect x="5.300" y="9.600" width="13.900" height="8.800" rx="4.400" fill="#07070d"/><circle cx="9.100" cy="13.100" r="2.700" fill="#1f7cf2"/><circle cx="15.200" cy="13.100" r="2.700" fill="#1f7cf2"/><circle cx="9.100" cy="13.100" r="1.500" fill="#b9d8ff"/><circle cx="15.200" cy="13.100" r="1.500" fill="#b9d8ff"/><circle cx="9.200" cy="13.100" r=".800" fill="#15153a"/><circle cx="15.300" cy="13.100" r=".800" fill="#15153a"/><rect x="10.700" y="16.500" width="3" height="1.200" rx=".300" fill="#fff"/></svg>
<svg style="left:1510px;top:13px;" width="21" height="22" viewBox="0 0 21 22" fill="none"><path d="M3.900 2.250H13.400Q14.450 2.250 14.450 3.300V5.900Q14.450 6.950 13.400 6.950H3.900L1.700 4.600Z" stroke="#0f73d8" stroke-width="1.550" stroke-linejoin="round"/><path d="M6.700 12.050H16.200L18.600 13.950 16.200 15.850H6.700Q5.650 15.850 5.650 14.800V13.100Q5.650 12.050 6.700 12.050Z" stroke="#0f73d8" stroke-width="1.550" stroke-linejoin="round"/><path d="M9.600 7V12M9.600 15.900V20.300" stroke="#0f73d8" stroke-width="1.600" stroke-linecap="round"/></svg>
<svg style="left:1634px;top:16px;" width="26" height="14" viewBox="0 0 26 14" fill="none"><rect x="1.350" y="1.550" width="22.400" height="10.600" rx="3" stroke="#0f73d8" stroke-width="1.750"/><path d="M5.800 5.500h2M9.500 5.500h2M13.200 5.500h2M17.100 5.500h2M5.800 8.500h2M17.100 8.500h2" stroke="#0f73d8" stroke-width="1.300"/><path d="M9.900 8.500h5.300" stroke="#0f73d8" stroke-width="1.300"/></svg>
<svg style="left:1736px;top:10px;" width="26" height="26" viewBox="0 0 26 26" fill="none"><path d="M11.29 2.23 L14.71 2.23 L15.13 4.98 L17.17 5.82 L19.41 4.18 L21.82 6.59 L20.18 8.83 L21.02 10.87 L23.77 11.29 L23.77 14.71 L21.02 15.13 L20.18 17.17 L21.82 19.41 L19.41 21.82 L17.17 20.18 L15.13 21.02 L14.71 23.77 L11.29 23.77 L10.87 21.02 L8.83 20.18 L6.59 21.82 L4.18 19.41 L5.82 17.17 L4.98 15.13 L2.23 14.71 L2.23 11.29 L4.98 10.87 L5.82 8.83 L4.18 6.59 L6.59 4.18 L8.83 5.82 L10.87 4.98Z" stroke="#676767" stroke-width="1.550" stroke-linejoin="round"/><circle cx="13" cy="13" r="2.950" stroke="#676767" stroke-width="1.550"/></svg>
<svg style="left:1780px;top:12px;" width="27" height="24" viewBox="0 0 27 24" fill="none"><path d="M11.900 18.200H4Q1.900 18.200 1.900 16.100V3.800Q1.900 1.700 4 1.700H22.100Q24.200 1.700 24.200 3.800V12.200" stroke="#676767" stroke-width="1.600" stroke-linecap="round"/><path d="M2 4.300L13 11.700 24.100 4.300" stroke="#676767" stroke-width="1.600" stroke-linejoin="round"/><path d="M15.300 18.300H24.300M19.600 13.900L24.400 18.300 19.600 22.600" stroke="#676767" stroke-width="1.600" stroke-linecap="round" stroke-linejoin="round"/></svg>
<svg style="left:1824.1px;top:11.1px;" width="26" height="26" viewBox="0 0 26 26" fill="none"><circle cx="13" cy="13" r="10.900" stroke="#676767" stroke-width="1.600"/><path d="M9.300 10.300Q9.700 7.200 12.700 7.200Q15.700 7.300 15.700 10.100Q15.700 12 13.800 12.900Q12.600 13.500 12.500 14.300" stroke="#676767" stroke-width="1.600" stroke-linecap="round"/><rect x="11.700" y="17.600" width="2.300" height="1.400" rx=".600" fill="#676767"/></svg>
<svg style="left:1870px;top:12px;" width="22" height="22" viewBox="0 0 22 22" fill="none"><path d="M2.100 1.900L20 20M20 1.900L2.100 20" stroke="#676767" stroke-width="1.500"/></svg>
<svg style="left:602px;top:193px;" width="10" height="19" viewBox="0 0 10 19" fill="none"><path d="M4.500 1.600V16.600" stroke="#000" stroke-width="1.100"/><path d="M0.900 1.600H3.700M5.300 1.600H8.100M0.900 16.600H3.700M5.300 16.600H8.100" stroke="#000" stroke-width="1.100"/></svg>
<span style="left:15.86px;top:7.00px;font-size:27.9px;color:#1c1a10;font-weight:700;transform:scaleX(0.9919);transform-origin:0 0;">Chi tiền gửi CTG00002</span>
<span style="left:1429.09px;top:16.00px;font-size:13.5px;color:#181818;-webkit-text-stroke:0.35px #181818;letter-spacing:0.349px;">Kiểm tra</span>
<span style="left:1539.79px;top:16.00px;font-size:13.5px;color:#181818;-webkit-text-stroke:0.35px #181818;letter-spacing:0.031px;">Hướng dẫn</span>
<span style="left:1665.99px;top:16.00px;font-size:13.5px;color:#181818;-webkit-text-stroke:0.35px #181818;letter-spacing:0.275px;">Phím tắt</span>
<span style="left:1824.30px;top:48.70px;font-size:13.5px;color:#181818;-webkit-text-stroke:0.35px #181818;letter-spacing:0.935px;">Tổng tiền</span>
<span style="left:33.33px;top:75.50px;font-size:15.3px;color:#6669f1;font-weight:700;transform:scaleX(0.9654);transform-origin:0 0;">Thông tin chung</span>
<span style="left:16.85px;top:124.00px;font-size:14px;color:#141414;font-weight:700;transform:scaleX(0.9567);transform-origin:0 0;">Tài khoản chi</span>
<span style="left:16.09px;top:161.50px;font-size:14px;color:#141414;font-weight:700;transform:scaleX(0.9681);transform-origin:0 0;">Nội dung TT</span>
<span style="left:16.95px;top:199.00px;font-size:14px;color:#141414;font-weight:700;transform:scaleX(0.9461);transform-origin:0 0;">Đơn vị nhận</span>
<span style="left:16.95px;top:236.50px;font-size:14px;color:#141414;font-weight:700;transform:scaleX(0.9564);transform-origin:0 0;">Địa chỉ</span>
<span style="left:16.85px;top:274.00px;font-size:14px;color:#141414;font-weight:700;transform:scaleX(0.9566);transform-origin:0 0;">Tài khoản nhận</span>
<span style="left:16.85px;top:311.50px;font-size:14px;color:#141414;font-weight:700;transform:scaleX(0.9776);transform-origin:0 0;">Tham chiếu</span>
<span style="left:143.97px;top:125.00px;font-size:13.8px;color:#2a2a2a;letter-spacing:0.839px;">3711.4.123456</span>
<span style="left:513.17px;top:125.00px;font-size:13.8px;color:#2a2a2a;letter-spacing:-0.088px;">KBNN Khu vực I</span>
<span style="left:1594.58px;top:124.00px;font-size:14px;color:#141414;font-weight:700;transform:scaleX(0.9873);transform-origin:0 0;">Ngày CT</span>
<span style="left:1676.55px;top:125.00px;font-size:13.8px;color:#474e6e;letter-spacing:1.089px;">13/11/2025</span>
<span style="left:1594.58px;top:161.50px;font-size:14px;color:#141414;font-weight:700;transform:scaleX(0.9873);transform-origin:0 0;">Ngày HT</span>
<span style="left:1676.55px;top:162.50px;font-size:13.8px;color:#474e6e;letter-spacing:1.089px;">13/11/2025</span>
<span style="left:1595.12px;top:199.00px;font-size:14px;color:#141414;font-weight:700;transform:scaleX(0.9399);transform-origin:0 0;">Số CT</span>
<span style="left:1595.12px;top:236.50px;font-size:14px;color:#141414;font-weight:700;transform:scaleX(0.9408);transform-origin:0 0;">Số CKC</span>
<span style="left:1676.30px;top:200.00px;font-size:13.8px;color:#2a2a2a;letter-spacing:0.414px;">CTG00002</span>
<span style="left:9.71px;top:374.00px;font-size:14.5px;color:#0f73da;-webkit-text-stroke:0.5px #0f73da;letter-spacing:0.565px;">Hạch toán</span>
<span style="left:102.67px;top:374.00px;font-size:14.5px;color:#1f1f1f;letter-spacing:0.357px;">Thống kê</span>
<span style="left:1336.02px;top:374.00px;font-size:15px;color:#1f1f1f;font-weight:700;transform:scaleX(0.9751);transform-origin:0 0;">Loại tiền</span>
<span style="left:1412.94px;top:375.00px;font-size:13.8px;color:#2a2a2a;letter-spacing:-0.310px;">VND</span>
<span style="left:1546.38px;top:374.30px;font-size:14px;color:#d0d1d6;font-weight:700;transform:scaleX(0.9358);transform-origin:0 0;">Xem công nợ phải trả</span>
<span style="left:1737.95px;top:374.30px;font-size:14px;color:#1f1f1f;font-weight:700;transform:scaleX(0.9448);transform-origin:0 0;">Định khoản nhanh</span>
<span style="left:36.12px;top:415.00px;font-size:14px;color:#161616;font-weight:700;transform:scaleX(0.9463);transform-origin:0 0;">Số chứng từ gốc</span>
<span style="left:202.85px;top:415.00px;font-size:14px;color:#161616;font-weight:700;transform:scaleX(0.9603);transform-origin:0 0;">Ngày chứng từ gốc</span>
<span style="left:387.35px;top:415.00px;font-size:14px;color:#161616;font-weight:700;transform:scaleX(0.9348);transform-origin:0 0;">TK Nợ</span>
<span style="left:497.85px;top:415.00px;font-size:14px;color:#161616;font-weight:700;transform:scaleX(0.9379);transform-origin:0 0;">TK Có</span>
<span style="left:656.61px;top:415.00px;font-size:14px;color:#161616;font-weight:700;transform:scaleX(0.9747);transform-origin:0 0;">Số tiền</span>
<span style="left:771.58px;top:415.00px;font-size:14px;color:#161616;font-weight:700;transform:scaleX(0.9877);transform-origin:0 0;">Nguồn</span>
<span style="left:980.87px;top:415.00px;font-size:14px;color:#161616;font-weight:700;transform:scaleX(0.9200);transform-origin:0 0;">Chương</span>
<span style="left:1090.58px;top:415.00px;font-size:14px;color:#161616;font-weight:700;transform:scaleX(0.9819);transform-origin:0 0;">Khoản</span>
<span style="left:1200.53px;top:415.00px;font-size:14px;color:#161616;font-weight:700;transform:scaleX(1.0318);transform-origin:0 0;">Mục</span>
<span style="left:1311.85px;top:415.00px;font-size:14px;color:#161616;font-weight:700;transform:scaleX(0.9648);transform-origin:0 0;">Tiểu mục</span>
<span style="left:1430.44px;top:415.00px;font-size:14px;color:#161616;font-weight:700;transform:scaleX(0.9722);transform-origin:0 0;">Cấp phát</span>
<span style="left:1579.58px;top:415.00px;font-size:14px;color:#161616;font-weight:700;transform:scaleX(0.9877);transform-origin:0 0;">Nghiệp vụ</span>
<span style="left:371.75px;top:450.00px;font-size:13.8px;color:#161616;letter-spacing:1.174px;">1351</span>
<span style="left:481.45px;top:450.00px;font-size:13.8px;color:#161616;letter-spacing:1.518px;">1121</span>
<span style="left:666.95px;top:450.00px;font-size:13.8px;color:#161616;letter-spacing:0.688px;">5.000.000</span>
<span style="left:756.67px;top:450.00px;font-size:13.8px;color:#161616;letter-spacing:0.024px;">Ngân sách Xã không tự chủ</span>
<span style="left:965.90px;top:450.00px;font-size:13.8px;color:#161616;letter-spacing:1.304px;">830</span>
<span style="left:1075.97px;top:450.00px;font-size:13.8px;color:#161616;letter-spacing:1.334px;">341</span>
<span style="left:1185.79px;top:450.00px;font-size:13.8px;color:#161616;letter-spacing:1.348px;">7750</span>
<span style="left:1295.79px;top:450.00px;font-size:13.8px;color:#161616;letter-spacing:1.386px;">7799</span>
<span style="left:1414.87px;top:450.00px;font-size:13.8px;color:#161616;letter-spacing:0.270px;">Lệnh chi</span>
<span style="left:1564.37px;top:450.00px;font-size:13.8px;color:#161616;letter-spacing:0.358px;">Nộp trả - Thực chi</span>
<span style="left:372.26px;top:487.00px;font-size:13.8px;color:#161616;letter-spacing:1.142px;">01121</span>
<span style="left:656.64px;top:487.00px;font-size:13.8px;color:#161616;letter-spacing:0.613px;">(5.000.000)</span>
<span style="left:756.67px;top:487.00px;font-size:13.8px;color:#161616;letter-spacing:0.024px;">Ngân sách Xã không tự chủ</span>
<span style="left:965.90px;top:487.00px;font-size:13.8px;color:#161616;letter-spacing:1.304px;">830</span>
<span style="left:1075.97px;top:487.00px;font-size:13.8px;color:#161616;letter-spacing:1.334px;">341</span>
<span style="left:1185.79px;top:487.00px;font-size:13.8px;color:#161616;letter-spacing:1.348px;">7750</span>
<span style="left:1295.79px;top:487.00px;font-size:13.8px;color:#161616;letter-spacing:1.386px;">7799</span>
<span style="left:1414.87px;top:487.00px;font-size:13.8px;color:#161616;letter-spacing:0.270px;">Lệnh chi</span>
<span style="left:1564.87px;top:488.00px;font-size:13.8px;color:#161616;letter-spacing:0.358px;">Nộp trả - Thực chi</span>
<span style="left:20.79px;top:521.00px;font-size:13.8px;color:#161616;">Tổng số:</span>
<span style="left:77.52px;top:521.00px;font-size:13.8px;color:#111;font-weight:700;">2</span>
<span style="left:89.01px;top:521.00px;font-size:13.8px;color:#161616;letter-spacing:0.309px;">bản ghi</span>
<span style="left:9.71px;top:599.00px;font-size:14.5px;color:#0f73da;-webkit-text-stroke:0.5px #0f73da;letter-spacing:0.501px;">Hạch toán đồng thời</span>
<span style="left:1708.22px;top:600.00px;font-size:13.3px;color:#0f73da;-webkit-text-stroke:0.35px #0f73da;letter-spacing:0.391px;">Cập nhật hạch toán đồng thời</span>
<span style="left:35.58px;top:640.00px;font-size:14px;color:#161616;font-weight:700;transform:scaleX(0.9835);transform-origin:0 0;">Diễn giải</span>
<span style="left:311.35px;top:640.00px;font-size:14px;color:#161616;font-weight:700;transform:scaleX(0.9348);transform-origin:0 0;">TK Nợ</span>
<span style="left:421.35px;top:640.00px;font-size:14px;color:#161616;font-weight:700;transform:scaleX(0.9379);transform-origin:0 0;">TK Có</span>
<span style="left:580.60px;top:640.00px;font-size:14px;color:#161616;font-weight:700;transform:scaleX(0.9802);transform-origin:0 0;">Số tiền</span>
<span style="left:695.06px;top:640.00px;font-size:14px;color:#161616;font-weight:700;">Nguồn</span>
<span style="left:970.47px;top:640.00px;font-size:14px;color:#161616;font-weight:700;transform:scaleX(0.9200);transform-origin:0 0;">Chương</span>
<span style="left:1080.07px;top:640.00px;font-size:14px;color:#161616;font-weight:700;transform:scaleX(0.9938);transform-origin:0 0;">Khoản</span>
<span style="left:1190.02px;top:640.00px;font-size:14px;color:#161616;font-weight:700;transform:scaleX(1.0430);transform-origin:0 0;">Mục</span>
<span style="left:1301.35px;top:640.00px;font-size:14px;color:#161616;font-weight:700;transform:scaleX(0.9730);transform-origin:0 0;">Tiểu mục</span>
<span style="left:1419.44px;top:640.00px;font-size:14px;color:#161616;font-weight:700;transform:scaleX(0.9806);transform-origin:0 0;">Cấp phát</span>
<span style="left:1569.07px;top:640.00px;font-size:14px;color:#161616;font-weight:700;transform:scaleX(0.9953);transform-origin:0 0;">Nghiệp vụ</span>
<span style="left:1718.57px;top:640.00px;font-size:14px;color:#161616;font-weight:700;transform:scaleX(0.9968);transform-origin:0 0;">Mã thống kê</span>
<span style="left:20.79px;top:710.00px;font-size:13.8px;color:#161616;">Tổng số:</span>
<span style="left:77.45px;top:710.00px;font-size:13.8px;color:#111;font-weight:700;">0</span>
<span style="left:89.01px;top:710.00px;font-size:13.8px;color:#161616;letter-spacing:0.309px;">bản ghi</span>
<span style="left:40.95px;top:769.00px;font-size:14px;color:#fff;font-weight:700;transform:scaleX(0.9691);transform-origin:0 0;">Đóng</span>
<span style="left:1730.50px;top:769.00px;font-size:14px;color:#fff;font-weight:700;transform:scaleX(0.9580);transform-origin:0 0;">Hoãn</span>
<span style="left:1834.74px;top:769.00px;font-size:14px;color:#fff;font-weight:700;transform:scaleX(0.9809);transform-origin:0 0;">Cất</span>
<span style="left:607.45px;top:769.00px;font-size:14px;color:#b4b5bf;font-weight:700;transform:scaleX(1.0103);transform-origin:0 0;">Nạp</span>
<span style="left:716.45px;top:769.00px;font-size:14px;color:#fff;font-weight:700;transform:scaleX(0.9568);transform-origin:0 0;">Tiện ích</span>
<span style="left:869.16px;top:769.00px;font-size:14px;color:#8e8f9c;font-weight:700;transform:scaleX(1.0048);transform-origin:0 0;">In</span>
<span style="left:975.98px;top:769.00px;font-size:14px;color:#c8c9d0;font-weight:700;transform:scaleX(0.9815);transform-origin:0 0;">Duyệt</span>
<span style="left:1091.18px;top:769.00px;font-size:14px;color:#c8c9d0;font-weight:700;transform:scaleX(0.9628);transform-origin:0 0;">Xóa</span>
<span style="left:1192.69px;top:769.00px;font-size:14px;color:#c8c9d0;font-weight:700;transform:scaleX(0.9693);transform-origin:0 0;">Khóa sổ</span>
</div></body></html>
